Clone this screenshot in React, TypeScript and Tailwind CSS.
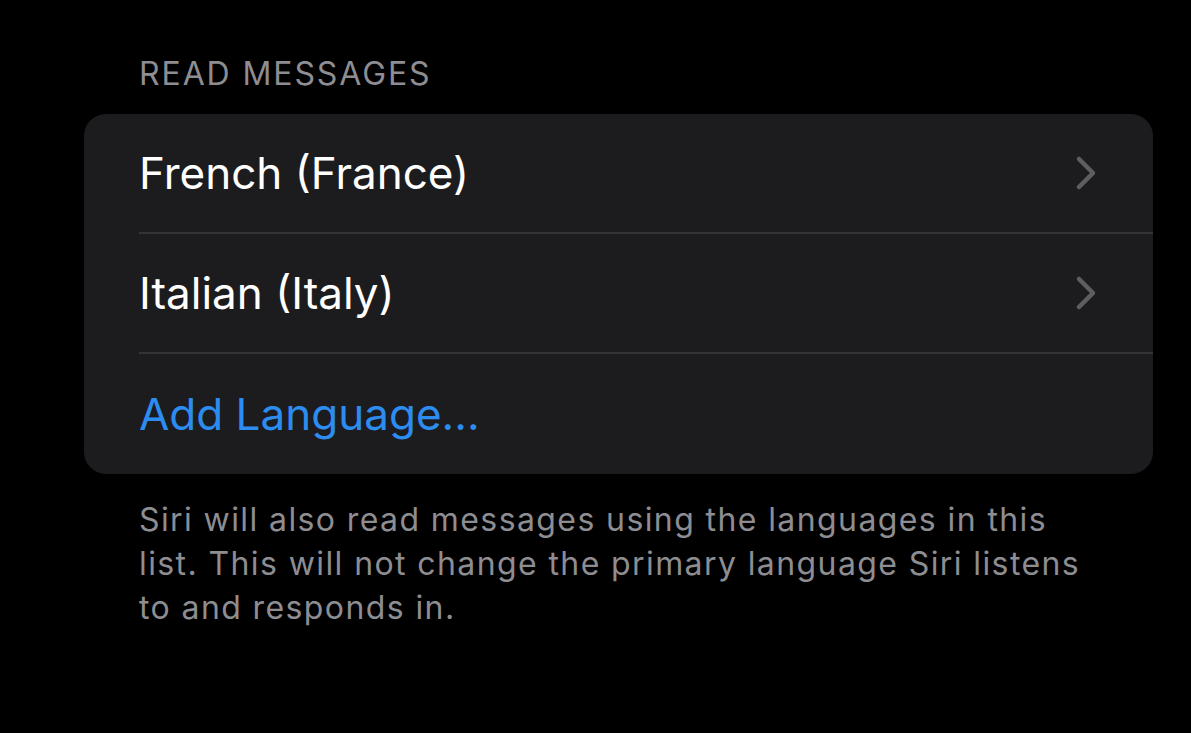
const rows = ['French (France)', 'Italian (Italy)'];

function Chevron() {
  return (
    <svg width="22" height="36" viewBox="0 0 22 36" fill="none">
      <polyline points="4,4 18,18 4,32" stroke="#5e5e62" strokeWidth="4.5" strokeLinecap="round" strokeLinejoin="round" />
    </svg>
  );
}

export default function App() {
  return (
    <div className="w-[1191px] h-[733px] bg-black overflow-hidden" style={{ fontFamily: 'Inter, "Noto Sans", sans-serif' }}>
      <div className="pl-[84px] pr-[38px] pt-[52px]">
        <div className="pl-[55px] text-[32px] leading-[44px] text-[#8d8d92] tracking-[1.9px]">READ MESSAGES</div>
        <div className="mt-[18px] bg-[#1c1c1e] rounded-[22px] overflow-hidden">
          {rows.map(r => (
            <div key={r} className="pl-[55px]">
              <div className="h-[120px] flex items-center justify-between border-b-2 border-[#343436] pr-[56px]">
                <span className="text-[44px] text-white">{r}</span>
                <Chevron />
              </div>
            </div>
          ))}
          <div className="h-[120px] pl-[55px] flex items-center">
            <span className="text-[44px] text-[#2d8cf0]">Add Language...</span>
          </div>
        </div>
        <div className="pl-[55px] pr-[66px] mt-[24px] text-[32px] leading-[44px] text-[#8d8d92] tracking-[1.4px]">
          Siri will also read messages using the languages in this list. This will not change the primary language Siri listens to and responds in.
        </div>
      </div>
    </div>
  );
}
